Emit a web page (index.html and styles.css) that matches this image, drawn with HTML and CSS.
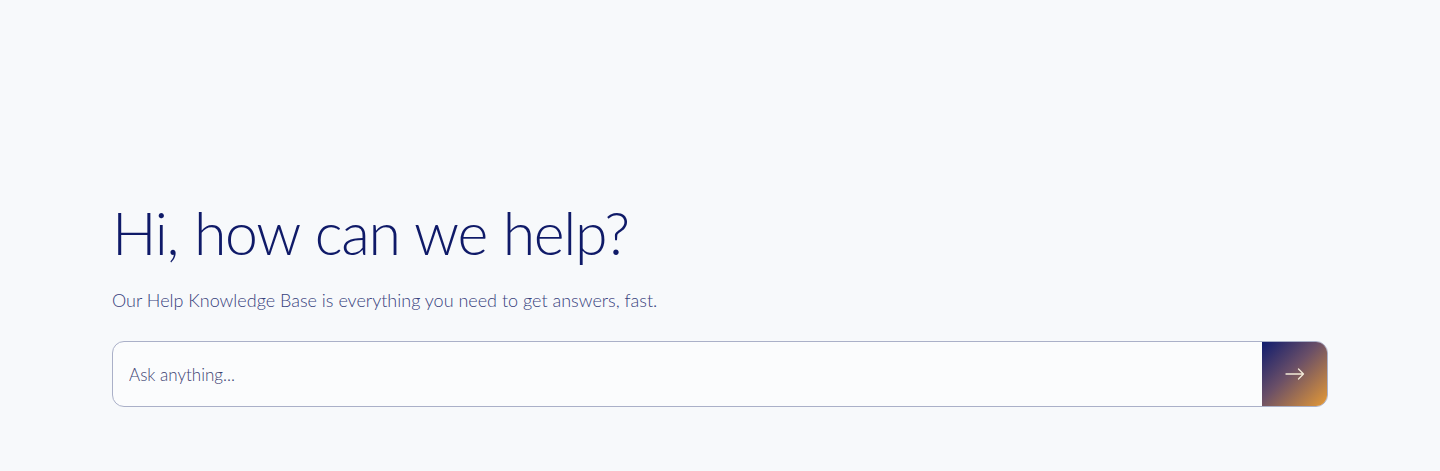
FILE: index.html
```html
<!DOCTYPE html>
<html lang="en">
<head>
<meta charset="utf-8">
<title>Help Center</title>
<link rel="stylesheet" href="styles.css">
</head>
<body>
<main class="hero">
  <div class="hero-inner">
    <h1 class="hero-title">Hi, how can we help?</h1>
    <p class="hero-sub">Our Help Knowledge Base is everything you need to get answers, fast.</p>
    <form class="search">
      <input class="search-input" type="text" placeholder="Ask anything...">
      <button class="search-btn" type="button" aria-label="Search">
        <svg width="20" height="12" viewBox="0 0 20 12" fill="none" stroke="#f3ead8" stroke-width="1.3" stroke-linecap="round" stroke-linejoin="round"><path d="M1 6h17.5M13.5 1l5 5-5 5"/></svg>
      </button>
    </form>
  </div>
</main>
</body>
</html>
```
FILE: styles.css
```css
* { box-sizing: border-box; }
html, body { margin: 0; padding: 0; }
body {
  background: #f7f9fb;
  font-family: "Lato", "Open Sans", sans-serif;
  color: #101a6a;
}
.hero {
  height: 471px;
  padding-top: 195px;
}
.hero-inner {
  width: 1216px;
  margin: 0 auto;
}
.hero-title {
  margin: 0;
  font-size: 59px;
  font-weight: 300;
  line-height: 76px;
  letter-spacing: -1.3px;
  word-spacing: 1px;
  color: #0f1a68;
}
.hero-sub {
  margin: 17px 0 0;
  font-size: 18px;
  font-weight: 300;
  line-height: 24px;
  color: #38427d;
}
.search {
  margin-top: 29px;
  display: flex;
  height: 66px;
  border: 1px solid #aab0c8;
  border-radius: 12px;
  background: #fbfcfd;
  overflow: hidden;
}
.search-input {
  flex: 1;
  border: 0;
  background: transparent;
  padding: 0 16px;
  font-family: inherit;
  font-size: 17px;
  font-weight: 300;
  color: #2b3366;
  outline: none;
}
.search-input::placeholder { color: #3b4272; opacity: 1; }
.search-btn {
  width: 65px;
  border: 0;
  padding: 0;
  display: flex;
  align-items: center;
  justify-content: center;
  background: linear-gradient(135deg, #101c6e 0%, #6a4f67 45%, #e59a35 100%);
  cursor: pointer;
}
```
